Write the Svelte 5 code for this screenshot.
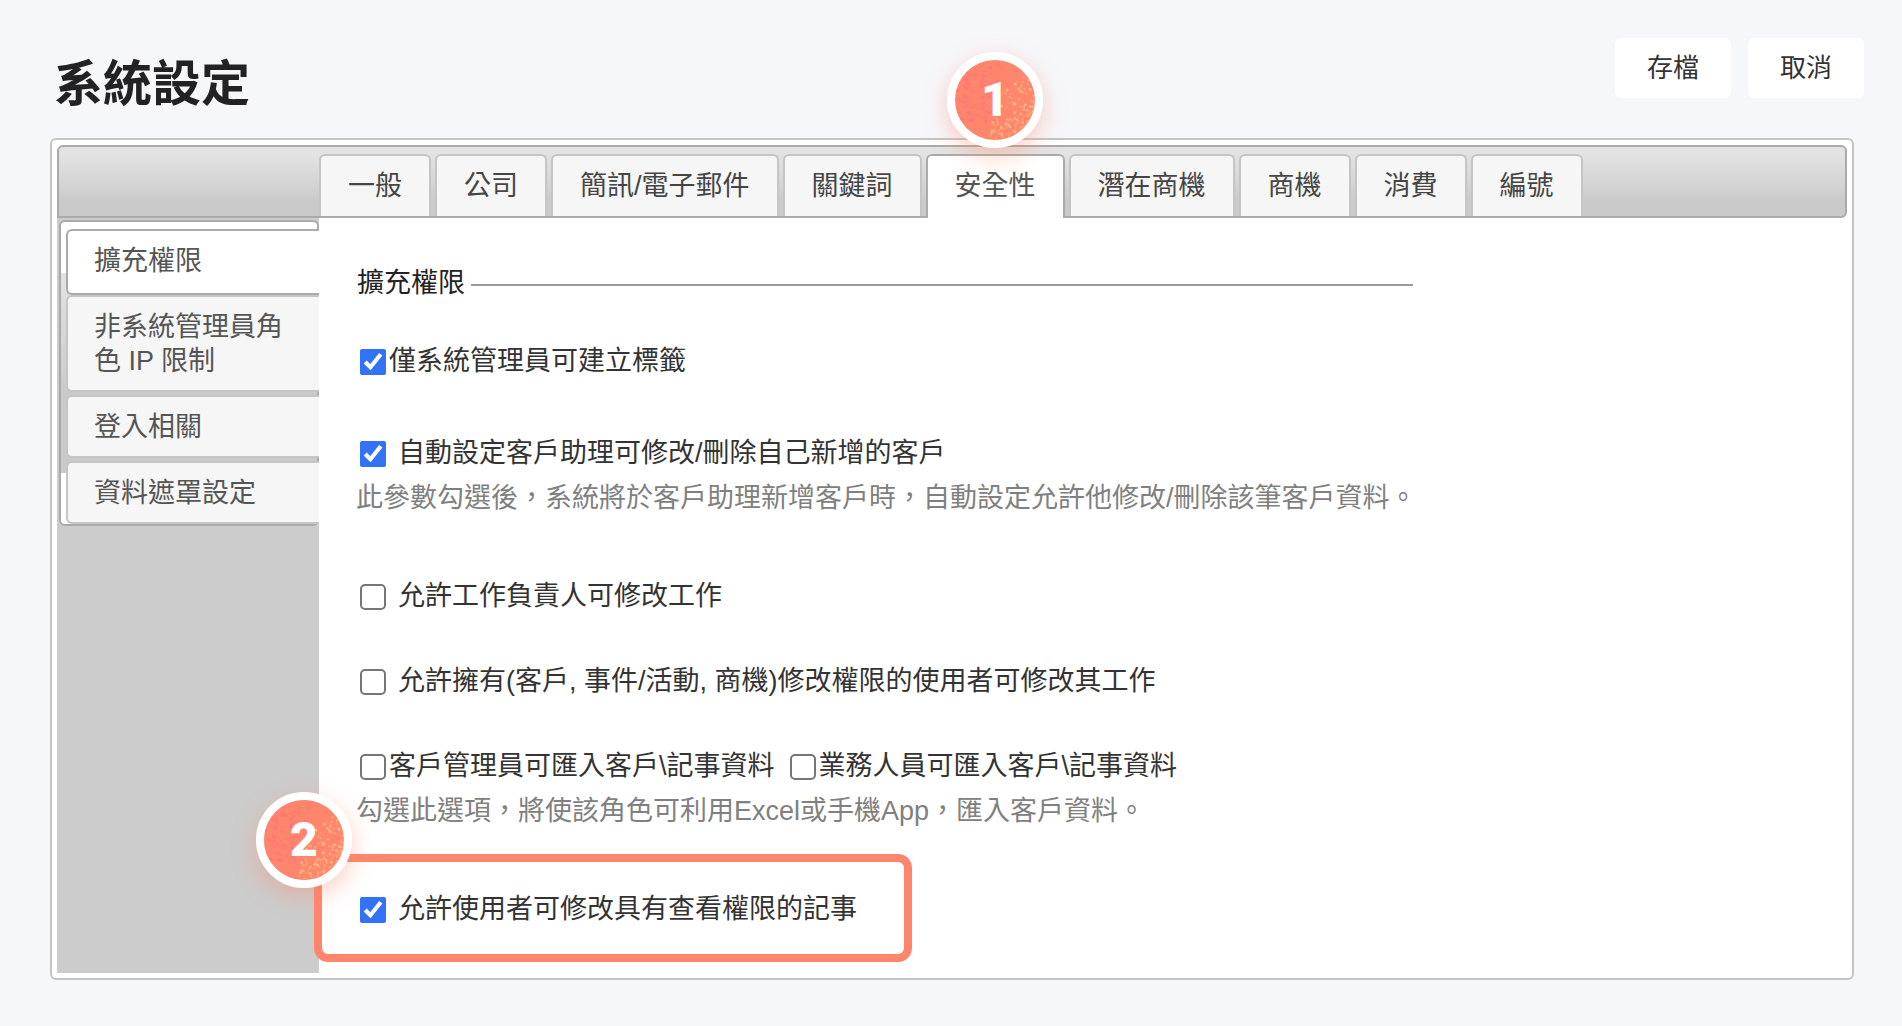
<script lang="ts">
  interface Option {
    id:       string
    label:    string
    checked:  boolean
    spaced?:  boolean
  }

  interface Group {
    options:    Option[]
    note?:      string
    loose?:     boolean
    highlight?: boolean
  }

  const tabs = ['一般', '公司', '簡訊/電子郵件', '關鍵詞', '安全性', '潛在商機', '商機', '消費', '編號']
  const sections = ['擴充權限', '非系統管理員角色 IP 限制', '登入相關', '資料遮罩設定']

  let activeTab = $state('安全性')
  let activeSection = $state('擴充權限')

  let groups: Group[] = $state([
    {
      options: [{ id: 'tag', label: '僅系統管理員可建立標籤', checked: true }],
      loose: true,
    },
    {
      options: [{ id: 'assistant', label: '自動設定客戶助理可修改/刪除自己新增的客戶', checked: true, spaced: true }],
      note: '此參數勾選後，系統將於客戶助理新增客戶時，自動設定允許他修改/刪除該筆客戶資料。',
    },
    {
      options: [{ id: 'task-owner', label: '允許工作負責人可修改工作', checked: false, spaced: true }],
    },
    {
      options: [{ id: 'task-editor', label: '允許擁有(客戶, 事件/活動, 商機)修改權限的使用者可修改其工作', checked: false, spaced: true }],
    },
    {
      options: [
        { id: 'import-admin', label: '客戶管理員可匯入客戶\\記事資料', checked: false },
        { id: 'import-sales', label: '業務人員可匯入客戶\\記事資料', checked: false },
      ],
      note: '勾選此選項，將使該角色可利用Excel或手機App，匯入客戶資料。',
    },
    {
      options: [{ id: 'note-viewer', label: '允許使用者可修改具有查看權限的記事', checked: true, spaced: true }],
      highlight: true,
    },
  ])

  // Seeded generator, so the grain is the same on every render
  function makeSpecks() {
    let seed = 11
    const rand = () => {
      seed = (seed * 16807) % 2147483647
      return seed / 2147483647
    }
    const light = Array.from({ length: 170 }, () => {
      const angle = -0.7 + rand() * 2.4
      const dist = 40 * Math.pow(rand(), 0.4)
      return {
        x: 40 + dist * Math.cos(angle),
        y: 40 + dist * Math.sin(angle),
        r: 0.5 + rand() * 1,
        fill: rand() > 0.4 ? '#ffb482' : '#ffa06e',
      }
    })
    const pink = Array.from({ length: 190 }, () => ({
      x: 2 + 44 * rand(),
      y: 4 + 60 * rand(),
      r: 0.5 + rand() * 1.3,
      fill: '#ff7873',
    }))
    return [...pink, ...light]
  }

  const specks = makeSpecks()
</script>

{#snippet badge(step: number)}
  <span class="badge">
    <svg viewBox="0 0 80 80" aria-hidden="true">
      <rect width="80" height="80" fill="#ff866c" />
      {#each specks as s}
        <circle cx={s.x} cy={s.y} r={s.r} fill={s.fill} />
      {/each}
    </svg>
    <b>{step}</b>
  </span>
{/snippet}

<header class="page-header">
  <h1>系統設定</h1>
  <div class="actions">
    <button type="button">存檔</button>
    <button type="button">取消</button>
  </div>
</header>

<main class="panel">
  <nav class="tab-bar">
    {#each tabs as tab}
      <a
        class="tab"
        class:active={tab === activeTab}
        href="#{tab}"
        onclick={(e) => { e.preventDefault(); activeTab = tab }}
      >
        {tab}
        {#if tab === '安全性'}
          {@render badge(1)}
        {/if}
      </a>
    {/each}
  </nav>

  <div class="body">
    <aside class="sidebar">
      <nav class="section-list">
        {#each sections as section}
          <a
            class="section"
            class:active={section === activeSection}
            href="#{section}"
            onclick={(e) => { e.preventDefault(); activeSection = section }}
          >{section}</a>
        {/each}
      </nav>
    </aside>

    <section class="content">
      <h2>擴充權限</h2>
      {#each groups as group}
        <div class="group" class:loose={group.loose} class:noted={group.note} class:highlight={group.highlight}>
          <div class="options">
            {#each group.options as option}
              <label class="option" class:spaced={option.spaced} for={option.id}>
                <input type="checkbox" id={option.id} bind:checked={option.checked} />
                <span>{option.label}</span>
              </label>
            {/each}
          </div>
          {#if group.note}
            <p class="note">{group.note}</p>
          {/if}
          {#if group.highlight}
            {@render badge(2)}
          {/if}
        </div>
      {/each}
    </section>
  </div>
</main>

<style>
  :global(body) {
    background: #f6f7fb;
    color: #333;
    font-family: "Liberation Sans", "Noto Sans CJK TC", sans-serif;
    font-size: 27px;
    line-height: 34px;
  }

  .page-header {
    display: flex;
    justify-content: space-between;
    align-items: flex-start;
    padding: 38px 38px 24px 54px;
  }

  h1 {
    margin: 16px 0 0;
    font-size: 49px;
    line-height: 60px;
    font-weight: 700;
    color: #222226;
  }

  .actions {
    display: flex;
    gap: 17px;
  }

  .actions button {
    padding: 13px 32px;
    border: 0;
    border-radius: 6px;
    background: #fff;
    color: #333;
    font: inherit;
    font-size: 26px;
    cursor: pointer;
  }

  .panel {
    margin: 0 48px 45px 50px;
    padding: 5px;
    border: 2px solid #c5c5c5;
    border-radius: 6px;
    background: #fff;
  }

  .tab-bar {
    display: flex;
    align-items: flex-start;
    gap: 4px;
    padding: 7px 0 0 260px;
    border: 2px solid #aaa;
    border-radius: 6px 6px 6px 0;
    background: linear-gradient(#e3e3e3 10%, #cacaca 80%);
  }

  .tab {
    position: relative;
    padding: 13px 27px;
    border: 2px solid #c5c5c5;
    border-bottom: 0;
    border-radius: 6px 6px 0 0;
    background: #f6f6f6;
    color: #454545;
    text-decoration: none;
    white-space: nowrap;
  }

  .tab.active {
    margin-bottom: -2px;
    padding-bottom: 15px;
    border-color: #aaa;
    background: #fff;
    color: #555;
  }

  .body {
    display: grid;
    grid-template-columns: 262px 1fr;
  }

  .sidebar {
    padding: 2px 0 0 2px;
    background: #ccc;
  }

  .section-list {
    display: flex;
    flex-direction: column;
    gap: 3px;
    padding: 7px 0 0 5px;
    border: 2px solid #aaa;
    border-radius: 6px;
    background: linear-gradient(#e3e3e3, #cacaca 60%) 0 51px / 100% 200px no-repeat #fff;
  }

  .section {
    margin-right: -2px;
    padding: 13px 26px 12px;
    border: 2px solid #c5c5c5;
    border-right: 0;
    border-radius: 6px 0 0 6px;
    background: #f6f6f6;
    color: #555;
    text-decoration: none;
  }

  .section.active {
    margin-bottom: -3px;
    padding-bottom: 15px;
    border-color: #aaa;
    background: #fff;
  }

  .content {
    padding: 48px 38px 11px;
  }

  h2 {
    display: flex;
    align-items: center;
    gap: 6px;
    max-width: 1056px;
    margin: 0 0 44px;
    font-size: 27px;
    font-weight: 400;
    color: #222;
  }

  h2::after {
    content: "";
    flex: 1;
    height: 2px;
    margin-top: 4px;
    background: #999;
  }

  .group {
    margin-bottom: 51px;
  }

  .group.loose { margin-bottom: 58px; }
  .group.noted { margin-bottom: 64px; }

  .options {
    display: flex;
    flex-wrap: wrap;
    gap: 12px;
  }

  .option {
    display: flex;
    gap: 3px;
    cursor: pointer;
  }

  .option.spaced { gap: 12px; }

  input[type="checkbox"] {
    flex: none;
    box-sizing: border-box;
    width: 26px;
    height: 26px;
    margin: 5px 0 0 3px;
    accent-color: #3273f6;
  }

  input[type="checkbox"]:not(:checked) {
    appearance: none;
    border: 2px solid #767676;
    border-radius: 5px;
    background: #fff;
  }

  .note {
    margin: 11px 0 0 -1px;
    color: #808080;
  }

  .group.highlight {
    position: relative;
    width: fit-content;
    margin: -38px 0 0 -43px;
    padding: 30px 47px 28px 35px;
    border: 8px solid #ff866c;
    border-radius: 14px;
  }

  .badge {
    position: absolute;
    z-index: 1;
    display: grid;
    place-items: center;
    box-sizing: border-box;
    width: 96px;
    height: 96px;
    border: 8px solid #fff;
    border-radius: 50%;
    box-shadow: 0 8px 24px rgba(255, 134, 98, 0.4);
  }

  .tab .badge {
    top: -104px;
    left: calc(50% - 48px);
  }

  .highlight .badge {
    top: -70px;
    left: -66px;
  }

  .badge svg,
  .badge b {
    grid-area: 1 / 1;
  }

  .badge svg {
    width: 100%;
    height: 100%;
    border-radius: 50%;
  }

  .badge b {
    font-family: Roboto, "Liberation Sans", sans-serif;
    font-size: 48px;
    font-weight: 900;
    color: #fff;
  }
</style>
